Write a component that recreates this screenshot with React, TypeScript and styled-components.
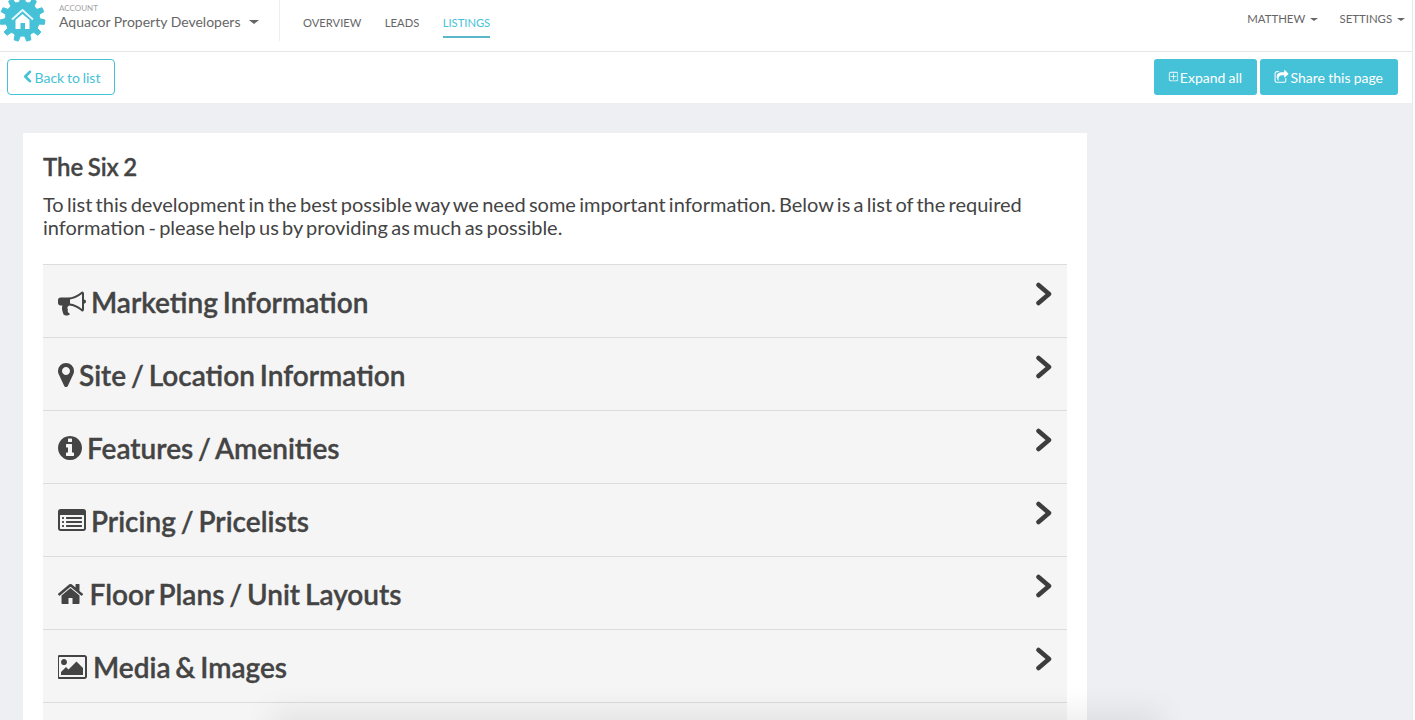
import React from "react";
import styled, { createGlobalStyle } from "styled-components";

const GlobalStyle = createGlobalStyle`
  html, body {
    margin: 0;
    height: 720px;
    overflow: hidden;
    background: #ffffff;
    font-family: Lato, "Open Sans", sans-serif;
    color: #444444;
  }
`;

// font awesome 4 glyphs, cropped to their own width so they sit in flow
const ICONS = {
  bullhorn: {
    x: 0,
    w: 1792,
    d: "M1664 736q53 0 90.5 37.5t37.5 90.5-37.5 90.5-90.5 37.5v384q0 52-38 90t-90 38q-417-347-812-380-58 19-91 66t-31 100.5 40 92.5q-20 33-23 65.5t6 58 33.5 55 48 50 61.5 50.5q-29 58-111.5 83t-168.5 11.5-132-55.5q-7-23-29.5-87.5t-32-94.5-23-89-15-101 3.5-98.5 22-110.5h-122q-66 0-113-47t-47-113v-192q0-66 47-113t113-47h480q435 0 896-384 52 0 90 38t38 90v384zm-128 604v-954q-394 302-768 343v270q377 42 768 341z",
  },
  marker: {
    x: 384,
    w: 1024,
    d: "M1152 640q0-106-75-181t-181-75-181 75-75 181 75 181 181 75 181-75 75-181zm256 0q0 109-33 179l-364 774q-16 33-47.5 52t-67.5 19-67.5-19-46.5-52l-365-774q-33-70-33-179 0-212 150-362t362-150 362 150 150 362z",
  },
  info: {
    x: 128,
    w: 1536,
    d: "M1152 1376v-160q0-14-9-23t-23-9h-96v-512q0-14-9-23t-23-9h-320q-14 0-23 9t-9 23v160q0 14 9 23t23 9h96v320h-96q-14 0-23 9t-9 23v160q0 14 9 23t23 9h448q14 0 23-9t9-23zm-128-896v-160q0-14-9-23t-23-9h-192q-14 0-23 9t-9 23v160q0 14 9 23t23 9h192q14 0 23-9t9-23zm640 416q0 209-103 385.5t-279.5 279.5-385.5 103-385.5-103-279.5-279.5-103-385.5 103-385.5 279.5-279.5 385.5-103 385.5 103 279.5 279.5 103 385.5z",
  },
  list: {
    x: 0,
    w: 1792,
    d: "M384 1184v64q0 13-9.5 22.5t-22.5 9.5h-64q-13 0-22.5-9.5t-9.5-22.5v-64q0-13 9.5-22.5t22.5-9.5h64q13 0 22.5 9.5t9.5 22.5zm0-256v64q0 13-9.5 22.5t-22.5 9.5h-64q-13 0-22.5-9.5t-9.5-22.5v-64q0-13 9.5-22.5t22.5-9.5h64q13 0 22.5 9.5t9.5 22.5zm0-256v64q0 13-9.5 22.5t-22.5 9.5h-64q-13 0-22.5-9.5t-9.5-22.5v-64q0-13 9.5-22.5t22.5-9.5h64q13 0 22.5 9.5t9.5 22.5zm1152 512v64q0 13-9.5 22.5t-22.5 9.5h-960q-13 0-22.5-9.5t-9.5-22.5v-64q0-13 9.5-22.5t22.5-9.5h960q13 0 22.5 9.5t9.5 22.5zm0-256v64q0 13-9.5 22.5t-22.5 9.5h-960q-13 0-22.5-9.5t-9.5-22.5v-64q0-13 9.5-22.5t22.5-9.5h960q13 0 22.5 9.5t9.5 22.5zm0-256v64q0 13-9.5 22.5t-22.5 9.5h-960q-13 0-22.5-9.5t-9.5-22.5v-64q0-13 9.5-22.5t22.5-9.5h960q13 0 22.5 9.5t9.5 22.5zm128 704v-832q0-13-9.5-22.5t-22.5-9.5h-1472q-13 0-22.5 9.5t-9.5 22.5v832q0 13 9.5 22.5t22.5 9.5h1472q13 0 22.5-9.5t9.5-22.5zm128-1088v1088q0 66-47 113t-113 47h-1472q-66 0-113-47t-47-113v-1088q0-66 47-113t113-47h1472q66 0 113 47t47 113z",
  },
  home: {
    x: 96,
    w: 1700,
    d: "M1472 992v480q0 26-19 45t-45 19h-384v-384h-256v384h-384q-26 0-45-19t-19-45v-480q0-1 .5-3t.5-3l575-474 575 474q1 2 1 6zm223-69l-62 74q-8 9-21 11h-3q-13 0-21-7l-692-577-692 577q-12 8-24 7-13-2-21-11l-62-74q-8-10-7-23.5t11-21.5l719-599q32-26 76-26t76 26l244 204v-195q0-14 9-23t23-9h192q14 0 23 9t9 23v408l219 182q10 8 11 21.5t-7 23.5z",
  },
  picture: {
    x: 0,
    w: 1920,
    d: "M576 576q0 80-56 136t-136 56-136-56-56-136 56-136 136-56 136 56 56 136zm1024 384v448h-1408v-192l320-320 160 160 512-512zm96-704h-1600q-13 0-22.5 9.5t-9.5 22.5v1216q0 13 9.5 22.5t22.5 9.5h1600q13 0 22.5-9.5t9.5-22.5v-1216q0-13-9.5-22.5t-22.5-9.5zm160 32v1216q0 66-47 113t-113 47h-1600q-66 0-113-47t-47-113v-1216q0-66 47-113t113-47h1600q66 0 113 47t47 113z",
  },
  share: {
    x: 0,
    w: 1728,
    d: "M1472 989v259q0 119-84.5 203.5t-203.5 84.5h-832q-119 0-203.5-84.5t-84.5-203.5v-832q0-119 84.5-203.5t203.5-84.5h255q13 0 22.5 9.5t9.5 22.5q0 27-26 32-77 26-133 60-10 4-16 4h-112q-66 0-113 47t-47 113v832q0 66 47 113t113 47h832q66 0 113-47t47-113v-214q0-19 18-29 28-13 54-37 16-16 35-8 21 9 21 29zm237-496l-384 384q-18 19-45 19-12 0-25-5-39-17-39-59v-192h-160q-323 0-438 131-119 137-74 473 3 23-20 34-8 2-12 2-16 0-26-13-10-14-21-31t-39.5-68.5-49.5-99.5-38.5-114-17.5-122q0-49 3.5-91t14-90 28-88 47-81.5 68.5-74 94.5-61.5 124.5-48.5 159.5-30.5 196.5-11h160v-192q0-42 39-59 13-5 25-5 26 0 45 19l384 384q19 19 19 45t-19 45z",
  },
  plusSquare: {
    x: 64,
    w: 1536,
    d: "M1344 800v64q0 14-9 23t-23 9h-352v352q0 14-9 23t-23 9h-64q-14 0-23-9t-9-23v-352h-352q-14 0-23-9t-9-23v-64q0-14 9-23t23-9h352v-352q0-14 9-23t23-9h64q14 0 23 9t9 23v352h352q14 0 23 9t9 23zm128 448v-832q0-66-47-113t-113-47h-832q-66 0-113 47t-47 113v832q0 66 47 113t113 47h832q66 0 113-47t47-113zm128-832v832q0 119-84.5 203.5t-203.5 84.5h-832q-119 0-203.5-84.5t-84.5-203.5v-832q0-119 84.5-203.5t203.5-84.5h832q119 0 203.5 84.5t84.5 203.5z",
  },
};

type IconName = keyof typeof ICONS;

function FaIcon({ name, size }: { name: IconName; size: number }) {
  const icon = ICONS[name];
  return (
    <svg
      viewBox={`${icon.x} 0 ${icon.w} 1792`}
      width={(icon.w / 1792) * size}
      height={size}
      fill="currentColor"
      style={{ flex: "none" }}
    >
      <path d={icon.d} />
    </svg>
  );
}

function gearPath() {
  const teeth = 11;
  const cx = 22.5;
  const cy = 21;
  const pts: string[] = [];
  for (let i = 0; i < teeth; i++) {
    const a = (i / teeth) * Math.PI * 2 - Math.PI / 2;
    const step = (Math.PI * 2) / teeth;
    const add = (r: number, t: number) =>
      pts.push(`${(cx + r * Math.cos(a + t * step)).toFixed(2)},${(cy + r * Math.sin(a + t * step)).toFixed(2)}`);
    add(17, -0.5);
    add(17.5, -0.27);
    add(22.5, -0.17);
    add(22.5, 0.17);
    add(17.5, 0.27);
  }
  return pts.join(" ");
}

function Logo() {
  return (
    <LogoSvg viewBox="0 0 46 46" width={46} height={46}>
      <polygon points={gearPath()} fill="#45c1d8" strokeLinejoin="round" stroke="#45c1d8" strokeWidth={1} />
      <path d="M12 21.5 22.5 12 33 21.5" fill="none" stroke="#e8f8fb" strokeWidth={2} />
      <path d="M15.5 22 22.5 16 29.5 22V31H25V25H20.5V31H15.5Z" fill="#ffffff" />
    </LogoSvg>
  );
}

const SECTIONS: { icon: IconName; label: string }[] = [
  { icon: "bullhorn", label: "Marketing Information" },
  { icon: "marker", label: "Site / Location Information" },
  { icon: "info", label: "Features / Amenities" },
  { icon: "list", label: "Pricing / Pricelists" },
  { icon: "home", label: "Floor Plans / Unit Layouts" },
  { icon: "picture", label: "Media & Images" },
];

export default function App() {
  return (
    <>
      <GlobalStyle />
      <Page>
        <TopNav>
          <Brand>
            <Logo />
            <Account>
              <AccountLabel>ACCOUNT</AccountLabel>
              <AccountName>
                Aquacor Property Developers <Caret $size={4} $gap={8} />
              </AccountName>
            </Account>
          </Brand>
          <NavLinks>
            <NavLink>OVERVIEW</NavLink>
            <NavLink>LEADS</NavLink>
            <NavLink $active>LISTINGS</NavLink>
          </NavLinks>
          <UserMenu>
            <UserItem>
              MATTHEW <Caret $size={3} $gap={5} />
            </UserItem>
            <UserItem>
              SETTINGS <Caret $size={3} $gap={5} />
            </UserItem>
          </UserMenu>
        </TopNav>
        <ActionBar>
          <OutlineButton>
            <BackChevron viewBox="0 0 10 14" width={9} height={13}>
              <polyline points="7.6,1.8 2.6,7 7.6,12.2" />
            </BackChevron>
            Back to list
          </OutlineButton>
          <ActionGroup>
            <SolidButton>
              <FaIcon name="plusSquare" size={12} />
              Expand all
            </SolidButton>
            <SolidButton>
              <FaIcon name="share" size={15} />
              Share this page
            </SolidButton>
          </ActionGroup>
        </ActionBar>
        <Content>
          <Card>
            <Title>The Six 2</Title>
            <Intro>
              To list this development in the best possible way we need some important information. Below is a list of
              the required information - please help us by providing as much as possible.
            </Intro>
            <Accordion>
              {SECTIONS.map((s) => (
                <Row key={s.label}>
                  <RowLabel>
                    <FaIcon name={s.icon} size={28} />
                    {s.label}
                  </RowLabel>
                  <RowChevron viewBox="0 0 18 24" width={18} height={24}>
                    <polyline points="3.5,3 14,12 3.5,21" />
                  </RowChevron>
                </Row>
              ))}
              <Row />
            </Accordion>
          </Card>
        </Content>
        <BottomShade />
      </Page>
    </>
  );
}

const Page = styled.div`
  position: relative;
  width: 1412px;
  height: 720px;
  overflow: hidden;
  background: #eeeff3;
  border-right: 1px solid #e8e8e8;
`;

const TopNav = styled.header`
  display: flex;
  align-items: flex-start;
  height: 51px;
  background: #ffffff;
  border-bottom: 1px solid #e7e7e7;
`;

const Brand = styled.div`
  display: flex;
  align-items: flex-start;
  height: 41px;
  padding-right: 20px;
  border-right: 1px solid #eeeeee;
`;

const LogoSvg = styled.svg`
  flex: none;
  margin-top: -2px;
  margin-right: 13px;
`;

const Account = styled.div`
  display: flex;
  flex-direction: column;
  padding-top: 3px;
`;

const AccountLabel = styled.span`
  font-size: 8px;
  line-height: 10px;
  color: #a3a3a3;
`;

const AccountName = styled.span`
  font-size: 14px;
  line-height: 18px;
  color: #666666;
`;

const Caret = styled.span<{ $size: number; $gap: number }>`
  display: inline-block;
  vertical-align: middle;
  margin-left: ${(p) => p.$gap - 3}px;
  margin-top: -2px;
  border-top: ${(p) => p.$size}px solid #666666;
  border-left: ${(p) => p.$size + 1}px solid transparent;
  border-right: ${(p) => p.$size + 1}px solid transparent;
`;

const NavLinks = styled.nav`
  display: flex;
  align-items: flex-start;
  gap: 23.5px;
  margin-left: 23px;
  margin-top: 8px;
`;

const NavLink = styled.a<{ $active?: boolean }>`
  font-size: 11.2px;
  line-height: 14px;
  padding: 8px 0 6px;
  color: ${(p) => (p.$active ? "#45c1d8" : "#666666")};
  border-bottom: 2px solid ${(p) => (p.$active ? "#5ab8ca" : "transparent")};
`;

const UserMenu = styled.div`
  display: flex;
  gap: 21.5px;
  margin-left: auto;
  margin-right: 7px;
  margin-top: 12px;
`;

const UserItem = styled.span`
  font-size: 11.4px;
  line-height: 14px;
  color: #666666;
`;

const ActionBar = styled.div`
  display: flex;
  justify-content: space-between;
  align-items: flex-start;
  box-sizing: border-box;
  height: 51px;
  padding: 7px 14px 0 7px;
  background: #ffffff;
`;

const ActionGroup = styled.div`
  display: flex;
  gap: 3px;
`;

const OutlineButton = styled.button`
  display: flex;
  align-items: center;
  gap: 3px;
  height: 36px;
  padding: 0 14px 0 14.5px;
  background: #ffffff;
  border: 1px solid #45c1d8;
  border-radius: 4px;
  color: #45c1d8;
  font: 14px Lato, sans-serif;
  word-spacing: -0.8px;
`;

const BackChevron = styled.svg`
  fill: none;
  stroke: #45c1d8;
  stroke-width: 3;
  stroke-linecap: round;
  stroke-linejoin: round;
  margin-top: -2px;
`;

const SolidButton = styled.button`
  display: flex;
  align-items: center;
  gap: 2px;
  height: 36px;
  padding: 0 15px 0 14px;
  background: #45c1d8;
  border: none;
  border-radius: 3px;
  color: #ffffff;
  font: 14px Lato, sans-serif;
  word-spacing: -0.4px;
`;

const Content = styled.main`
  padding: 30px 0 0 23px;
`;

const Card = styled.section`
  width: 1024px;
  padding: 20px;
  background: #ffffff;
`;

const Title = styled.h1`
  margin: 0 0 13px;
  font-size: 24px;
  line-height: 27px;
  font-weight: 600;
  letter-spacing: -0.05px;
  word-spacing: -1.4px;
  -webkit-text-stroke: 0.3px #444444;
  color: #444444;
`;

const Intro = styled.p`
  margin: 0 0 25px;
  font-size: 20px;
  line-height: 23px;
  word-spacing: -1.85px;
  color: #444444;
`;

const Accordion = styled.div`
  display: flex;
  flex-direction: column;
`;

const Row = styled.div`
  display: flex;
  justify-content: space-between;
  align-items: flex-start;
  box-sizing: border-box;
  height: 73px;
  padding: 0 14px 0 15px;
  background: #f5f5f5;
  border-top: 1px solid #dcdcdc;
`;

const RowLabel = styled.div`
  display: flex;
  align-items: center;
  gap: 5px;
  height: 74px;
  font-size: 28px;
  font-weight: 600;
  word-spacing: -2.1px;
  -webkit-text-stroke: 0.35px #444444;
  color: #444444;
`;

const RowChevron = styled.svg`
  margin-top: 17px;
  fill: none;
  stroke: #3d3d3d;
  stroke-width: 4.5;
  stroke-linecap: round;
  stroke-linejoin: round;
`;

const BottomShade = styled.div`
  position: absolute;
  left: 290px;
  right: 270px;
  bottom: -30px;
  height: 20px;
  background: rgba(0, 0, 0, 0.1);
  box-shadow: 0 0 30px 20px rgba(0, 0, 0, 0.07);
`;
